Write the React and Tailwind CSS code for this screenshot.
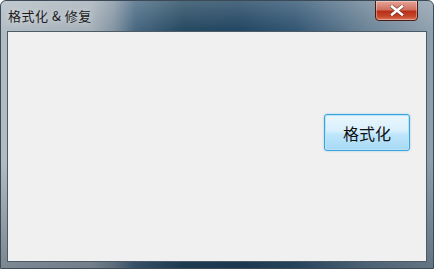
export default function App() {
  return (
    <div
      className="relative w-[434px] h-[269px] flex flex-col rounded-t-[6px] overflow-hidden bg-[linear-gradient(to_right,#b2bcc4_0%,#a3aeb7_21%,#8394a2_26%,#466680_31%,#22475f_42%,#1f4360_55%,#2f5371_68%,#6b8396_85%,#8e9fad_100%)] border border-[#3b4a56]"
      style={{ fontFamily: '"Noto Sans CJK SC", "Noto Sans", sans-serif' }}
    >
      {/* vertical shading over the frame */}
      <div className="absolute inset-0 pointer-events-none bg-[linear-gradient(to_bottom,rgba(255,255,255,0.2)_0%,rgba(255,255,255,0)_12%,rgba(0,0,0,0)_60%,rgba(20,35,50,0.35)_100%)]" />

      {/* title bar */}
      <div className="relative h-[30px] flex items-start shrink-0">
        <span className="pl-[7px] pt-[7px] text-[13px] leading-[16px] tracking-[0.5px] text-[#1b1b1b] font-normal [text-shadow:0_0_6px_rgba(255,255,255,0.7)]">
          格式化 &amp; 修复
        </span>
        <div className="absolute right-[15px] top-[-1px] w-[43px] h-[21px] rounded-b-[4px] border border-[#4a1a14] bg-[linear-gradient(to_bottom,#e6a497_0%,#d0715f_45%,#b8301a_55%,#c5462a_80%,#d8765a_100%)] flex items-center justify-center shadow-[inset_0_0_0_1px_rgba(255,255,255,0.35)]">
          <svg width="14" height="11" viewBox="0 0 14 11">
            <path
              d="M2 1.5 L12 9.5 M12 1.5 L2 9.5"
              stroke="#3a1410"
              strokeWidth="4"
              strokeLinecap="square"
              opacity="0.5"
            />
            <path
              d="M2 1.5 L12 9.5 M12 1.5 L2 9.5"
              stroke="#ffffff"
              strokeWidth="2.6"
              strokeLinecap="square"
            />
          </svg>
        </div>
      </div>

      {/* client area */}
      <div className="relative flex-1 mx-[6px] mb-[6px] border border-[#4d5b66] bg-[#f0f0f0] flex justify-end items-start">
        <button className="mt-[82px] mr-[16px] w-[86px] h-[37px] rounded-[3px] border border-[#3ca2dc] bg-[linear-gradient(to_bottom,#eaf6fd_0%,#d9f0fc_45%,#bee6fd_55%,#a7d9f5_100%)] shadow-[inset_0_0_0_1px_#b8e4fa,0_0_2px_rgba(60,162,220,0.5)] text-[16px] leading-none text-[#111] font-normal flex items-center justify-center">
          格式化
        </button>
      </div>
    </div>
  );
}
